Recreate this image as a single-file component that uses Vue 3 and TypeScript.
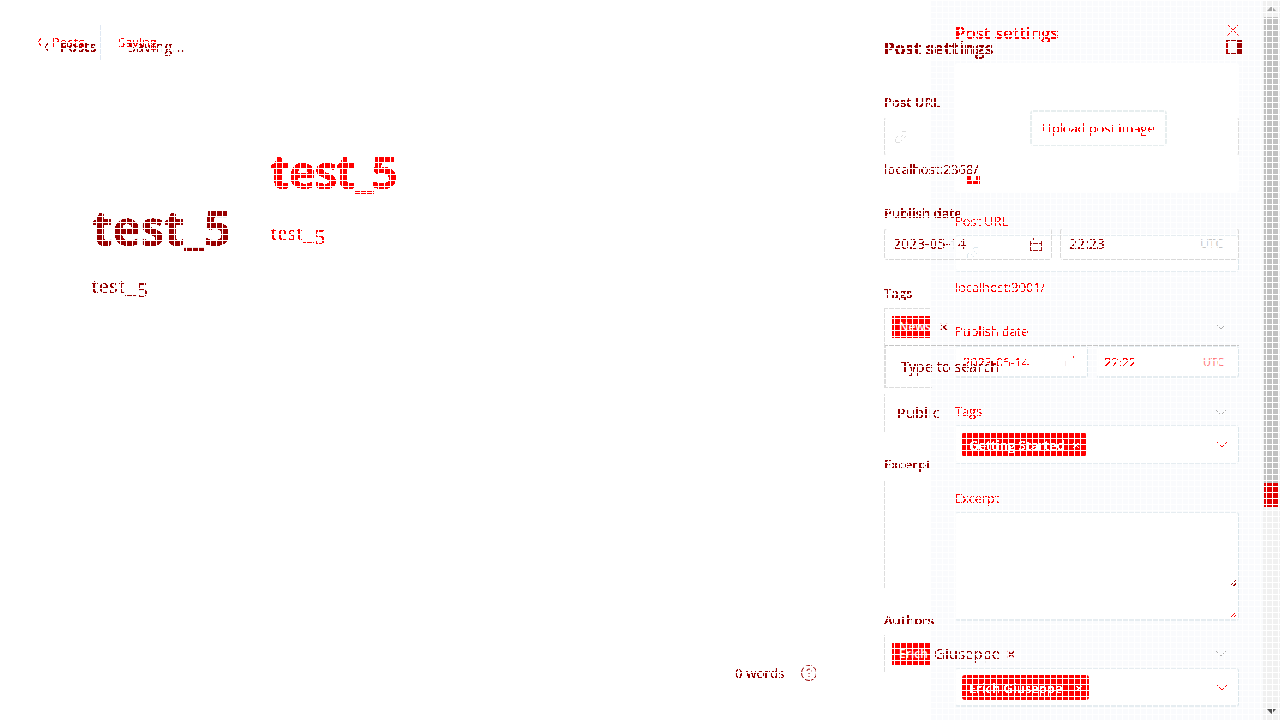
<script setup lang="ts">
const author: string = 'Erich Giuseppe'
</script>

<template>
  <div class="screen">
    <svg class="defs" width="0" height="0">
      <filter id="hard" x="-5%" y="-10%" width="110%" height="120%" color-interpolation-filters="sRGB">
        <feComponentTransfer><feFuncA type="discrete" tableValues="0 0 1 1 1" /></feComponentTransfer>
      </filter>
      <filter id="fringe" x="-5%" y="-10%" width="110%" height="120%" color-interpolation-filters="sRGB">
        <feComponentTransfer in="SourceAlpha" result="core"><feFuncA type="discrete" tableValues="0 0 1 1 1" /></feComponentTransfer>
        <feFlood flood-color="#980000" />
        <feComposite in2="core" operator="in" result="ink" />
        <feMerge><feMergeNode in="SourceGraphic" /><feMergeNode in="ink" /></feMerge>
      </filter>
    </svg>

    <section class="layer bright">
      <main class="editor">
        <nav class="nav">
          <svg class="chev" width="5" height="8" viewBox="0 0 5 8"><path d="M4 .5L1 4l3 3.500" /></svg>
          <span class="t back">Posts</span><i class="sep"></i><span class="t saving">Saving</span>
        </nav>
        <h1 class="t">test<span class="under">_</span>5</h1>
        <p class="t body">test_<span class="low">5</span></p>
      </main>
      <aside class="panel">
        <header><span class="t heading">Post settings</span>
          <svg width="12" height="12" viewBox="0 0 12 12"><path d="M.5.5l11 11M11.500.5l-11 11" /></svg></header>
        <div class="image">
          <button><span class="t upload">Upload post image</span></button>
          <svg class="mark" width="13" height="8" viewBox="0 0 13 8"><path d="M0 0h4v4h5V0h4v8H0z" /></svg>
        </div>
        <label class="l1"><span class="t s1">Post URL</span></label>
        <div class="field url"><svg class="link" width="14" height="14" viewBox="0 0 14 14"><path d="M6 4l2-2q2-2 4 0t0 4l-2 2M8 10l-2 2q-2 2-4 0t0-4l2-2M5 9l4-4" /></svg></div>
        <label class="l2"><span class="t s2">localhost:3001/</span></label>
        <label class="l3"><span class="t s3">Publish date</span></label>
        <div class="dates">
          <div class="field"><span class="t num">2023-05-14</span><svg class="cal" width="13" height="12" viewBox="0 0 14 14"><path d="M1 5.500v6M12 5v6" /><path class="tips" d="M10 0v2M5 0v2" /></svg></div>
          <div class="field"><span class="t num">22:22</span><span class="t utc">UTC</span></div>
        </div>
        <label class="l4"><span class="t s4">Tags</span></label>
        <div class="field select"><b class="chip"><span class="t c1">Getting Started</span><i class="t">×</i></b><svg class="down" width="10" height="6" viewBox="0 0 10 6"><path d="M.5.5L5 5 9.500.5" /></svg></div>
        <label class="l5"><span class="t s5">Excerpt</span></label>
        <div class="field area"><svg class="grip" width="7" height="7" viewBox="0 0 7 7"><path d="M1 6l5-5M4 6l2-2" /></svg></div>
        <div class="field select authors"><b class="chip wide"><span class="t c2">{{ author }}</span><i class="t">×</i></b><svg class="down" width="10" height="6" viewBox="0 0 10 6"><path d="M.5.5L5 5 9.500.5" /></svg></div>
      </aside>
      <div class="scroll">
        <svg width="9" height="5" viewBox="0 0 9 5"><path d="M0 5L4.500 0 9 5z" /></svg>
        <div class="thumb"></div><div class="extra"></div>
        <svg class="bottom" width="9" height="5" viewBox="0 0 9 5"><path d="M0 0l4.500 5L9 0z" /></svg>
      </div>
    </section>

    <section class="layer dark">
      <main class="editor">
        <nav class="nav">
          <svg class="chev" width="5" height="8" viewBox="0 0 5 8"><path d="M4 .5L1 4l3 3.500" /></svg>
          <span class="t back">Posts</span><span class="t saving">Saving...</span>
        </nav>
        <h1 class="t">test<span class="under">_</span>5</h1>
        <p class="t body">test_<span class="low">5</span></p>
        <footer><span class="t words">0 words</span>
          <svg width="16" height="16" viewBox="0 0 16 16"><circle cx="8" cy="8" r="7.500" /><path d="M6 6q0-2 2-2t2 2q0 1-2 2v1M8 11v1" /></svg></footer>
      </main>
      <aside class="panel">
        <header><span class="t heading">Post settings</span>
          <svg width="16" height="14" viewBox="0 0 16 14"><path class="frame" d="M.5.5h15v13H.5z" /><path class="edge" d="M0 1h2v12H0z" /><path class="fill" d="M11 0h5v14h-5z" /></svg></header>
        <label class="l1"><span class="t s1">Post URL</span></label>
        <div class="field sides url"><svg class="link" width="14" height="14" viewBox="0 0 14 14"><path d="M6 4l2-2q2-2 4 0t0 4l-2 2M8 10l-2 2q-2 2-4 0t0-4l2-2M5 9l4-4" /></svg></div>
        <label class="l2"><span class="t s2">localhost:2368/</span></label>
        <label class="l3"><span class="t s3">Publish date</span></label>
        <div class="dates">
          <div class="field"><span class="t num">2023-05-14</span><svg class="cal" width="14" height="13" viewBox="0 0 14 14"><path d="M1 2.500h12v11H1zM1 5.500h12M4 0v3M10 0v3" /></svg></div>
          <div class="field"><span class="t num">22:23</span><span class="t utc">UTC</span></div>
        </div>
        <label class="l4"><span class="t s4">Tags</span></label>
        <div class="half tagbox"><b class="chip"><span class="t">News</span></b><span class="t cross">×</span><svg class="down" width="10" height="6" viewBox="0 0 10 6"><path d="M.5.5L5 5 9.500.5" /></svg></div>
        <div class="half menu"><span class="t">Type to search</span></div>
        <div class="half access"><span class="t">Public</span><svg class="down" width="10" height="6" viewBox="0 0 10 6"><path d="M.5.5L5 5 9.500.5" /></svg></div>
        <label class="l5"><span class="t s5">Excerpt</span></label>
        <div class="half area"><svg class="grip" width="8" height="8" viewBox="0 0 7 7"><path d="M1 6l5-5M4 6l2-2" /></svg></div>
        <label class="l6"><span class="t s6">Authors</span></label>
        <div class="half people"><b class="chip"><span class="t">Erich</span></b><span class="t rest">Giuseppe</span><span class="t cross">×</span><svg class="down" width="10" height="6" viewBox="0 0 10 6"><path d="M.5.5L5 5 9.500.5" /></svg></div>
      </aside>
    </section>
    <div class="mesh"></div>
  </div>
</template>

<style>
body { overflow: hidden; }
</style>

<style scoped>
* { box-sizing: border-box; }
.screen { position: relative; width: 1280px; height: 720px; overflow: hidden; background: #fff; font: 13px/18px "Open Sans", "Noto Sans", sans-serif; white-space: nowrap; }
.defs { position: absolute; }
.layer { position: absolute; inset: 0; display: flex; }
.mesh { position: absolute; inset: 0; background: repeating-linear-gradient(90deg, #fff 0 1px, transparent 1px 6px), repeating-linear-gradient(#fff 0 1px, transparent 1px 6px); }
svg { display: block; flex: none; fill: none; stroke: #f00; shape-rendering: crispEdges; }
h1, p { margin: 0; }
h1 { font-weight: 700; }
i { font-style: normal; }
label, .t { display: block; }
.nav { display: flex; align-items: center; }
.under { display: inline-block; vertical-align: 3px; line-height: 1; }
.body { font-family: "Liberation Serif", serif; }
.low { display: inline-block; vertical-align: -4px; line-height: 1; }
header { display: flex; justify-content: space-between; align-items: center; }
.down { margin-left: auto; }

.bright { color: #f00; }
.bright .t { filter: url(#hard); }
.bright .editor { width: 931px; }
.bright .nav { height: 36px; margin: 24px 0 0 37px; }
.bright .back { margin-left: 10px; width: 48px; font-size: 13px; }
.sep { width: 1px; height: 36px; background: #dfe8f3; align-self: center; }
.bright .saving { margin-left: 17px; font-size: 13px; }
.bright h1 { height: 60px; margin: 81px 0 0 270px; font-size: 47px; line-height: 60px; font-weight: 700; letter-spacing: -2px; }
.bright .under { vertical-align: 2px; }
.bright .body { margin: 19px 0 0 271px; font-size: 21px; line-height: 26px; letter-spacing: .8px; }
.bright .panel { width: 332px; height: 720px; padding: 0 24px; background: #fafbfd; }
.bright header { height: 63px; padding-top: 3px; }
.bright header svg { margin-bottom: 6px; shape-rendering: auto; }
.heading { font-size: 17px; font-weight: 600; }
.bright .heading { letter-spacing: -.1px; }
.image { position: relative; height: 129px; background: #fff; border-radius: 3px; padding: 47px 0 0 75px; }
.image button { width: 137px; height: 36px; padding: 0 0 2px; border: 2px solid #e7eeef; border-bottom-width: 1px; border-radius: 4px; background: #fff; font: inherit; color: inherit; display: flex; align-items: center; justify-content: center; }
.upload { font-weight: 500; letter-spacing: -.1px; }
.mark { position: absolute; left: 12px; top: 113px; stroke: none; fill: #f00; }
.bright .field { background: #fff; border: 2px solid #e6edf1; border-top-width: 1px; border-left: 1px solid #fbfcfd; border-right: 1px solid #dbe6eb; border-radius: 3px; display: flex; }
.bright .l1 { margin: 20px 0 5px; }
.bright .s1, .bright .s3, .bright .s4, .bright .s5 { font-weight: 500; letter-spacing: -.15px; }
.bright .url { height: 37px; padding: 10px; }
.bright .link { stroke: #dce7ed; }
.bright .l2 { margin-top: 6px; letter-spacing: -.15px; }
.bright .l3 { margin: 26px 0 6px; }
.dates { display: grid; }
.bright .dates { grid-template-columns: 133px 143px; gap: 8px; }
.bright .dates .field { height: 32px; align-items: center; padding: 0 7px; }
.bright .num { letter-spacing: -.2px; }
.cal, .utc { margin-left: auto; }
.bright .cal { stroke: #f1e6e6; margin-right: 3px; }
.bright .cal .tips { stroke: #f00; }
.bright .utc { margin-right: 7px; font-size: 11px; filter: none; color: #ff7070; }
.bright .l4 { margin: 24px 0 5px; }
.bright .select { height: 39px; padding: 7px 11px 6px 6px; align-items: center; }
.chip { display: flex; align-items: center; background: #f00; color: #fff; border-radius: 3px; font-weight: 600; }
.bright .chip { width: 124px; height: 25px; padding: 0 6px 0 7px; justify-content: space-between; }
.bright .chip.wide { width: 127px; }
.chip i { font-size: 13px; font-weight: 400; }
.bright .l5 { margin: 25px 0 5px; }
.bright .area { height: 109px; align-items: flex-end; justify-content: flex-end; padding: 1px; }
.bright .authors { margin-top: 47px; }
.scroll { width: 17px; height: 720px; background: #f1f1f1; padding: 6px 2px 6px 1px; display: flex; flex-direction: column; }
.scroll svg { margin-left: 3px; stroke: none; fill: #a3a3a3; shape-rendering: auto; }
.scroll .thumb { margin-top: 6px; height: 466px; background: #c1c1c1; flex: none; }
.scroll .extra { height: 24px; background: #e00000; flex: none; }
.scroll .bottom { margin-top: auto; fill: #505050; }

.dark { color: #c4c4c4; }
.dark .t { filter: url(#fringe); }
.dark svg { stroke: #980000; }
.dark .editor { width: 884px; display: flex; flex-direction: column; }
.dark .nav { height: 20px; margin: 37px 0 0 44px; }
.dark .back { margin-left: 11px; width: 68px; font-weight: 600; font-size: 14px; }
.dark .saving { font-size: 14px; letter-spacing: .4px; }
.dark h1 { height: 60px; margin: 141px 0 0 92px; font-size: 48px; line-height: 60px; letter-spacing: -.4px; }
.dark .body { margin: 15px 0 0 92px; font-size: 21px; line-height: 26px; letter-spacing: 1.1px; }
.dark footer { display: flex; align-items: center; height: 18px; margin: 363px 0 0 735px; }
.dark .words { letter-spacing: .2px; }
.dark footer svg { margin-left: auto; margin-right: 67px; shape-rendering: auto; stroke: #980000; }
.dark .panel { width: 355px; display: flex; flex-direction: column; }
.dark header { height: 18px; margin: 39px -3px 0 0; }
.dark .heading { font-weight: 700; letter-spacing: 0; padding-top: 2px; }
.dark header svg { margin-bottom: 2px; }
.dark header svg .fill { fill: #900; stroke: none; }
.dark header svg .edge { fill: #c00000; stroke: none; }
.dark .s1, .dark .s3, .dark .s4, .dark .s5, .dark .s6 { font-weight: 600; }
.dark .field { border: 1px solid #d9d9d9; border-radius: 3px; display: flex; }
.dark .sides { border-color: transparent #ddd; }
.dark .l1 { margin: 36px 0 6px; }
.dark .url { height: 39px; padding: 12px 9px; }
.dark .link { stroke: #ddd; }
.dark .l2 { margin-top: 4px; }
.dark .s2 { letter-spacing: .15px; }
.dark .l3 { margin: 26px 0 6px; }
.dark .dates { grid-template-columns: 168px 179px; gap: 8px; }
.dark .dates .field { height: 32px; align-items: center; padding: 0 8px; }
.dark .num { font-size: 14px; }
.dark .utc { margin-right: 7px; filter: none; font-size: 12px; }
.dark .l4 { margin: 24px 0 6px; }
.half { position: relative; display: flex; align-items: center; }
.half::before { content: ""; position: absolute; left: 0; top: 0; width: 46px; height: 100%; border: 0 solid #ddd; border-left-width: 1px; }
.half .down { margin-right: 13px; stroke: #aaa; }
.tagbox { height: 38px; border-bottom: 1px solid #c5c5c5; }
.tagbox::before { border-top-width: 1px; }
.dark .chip { width: 38px; height: 22px; margin-left: 8px; padding-left: 7px; font-size: 12px; border-radius: 0; }
.dark .chip .t { filter: none; }
.dark .cross { margin-left: 9px; font-size: 17px; color: #f00; }
.menu { height: 41px; padding-left: 17px; font-size: 14px; letter-spacing: .2px; }
.menu::before { border-bottom-width: 1px; border-left-width: 2px; }
.access { height: 38px; margin-top: 7px; padding-left: 13px; font-size: 14px; letter-spacing: .6px; }
.dark .l5 { margin: 23px 0 7px; }
.dark .area { height: 108px; align-items: flex-end; justify-content: flex-end; padding: 1px 2px; }
.dark .l6 { margin: 23px 0 6px; }
.people { height: 38px; }
.people .rest { margin-left: 4px; font-size: 15px; margin-top: -2px; }
.people .cross { margin-left: 6px; }
</style>
